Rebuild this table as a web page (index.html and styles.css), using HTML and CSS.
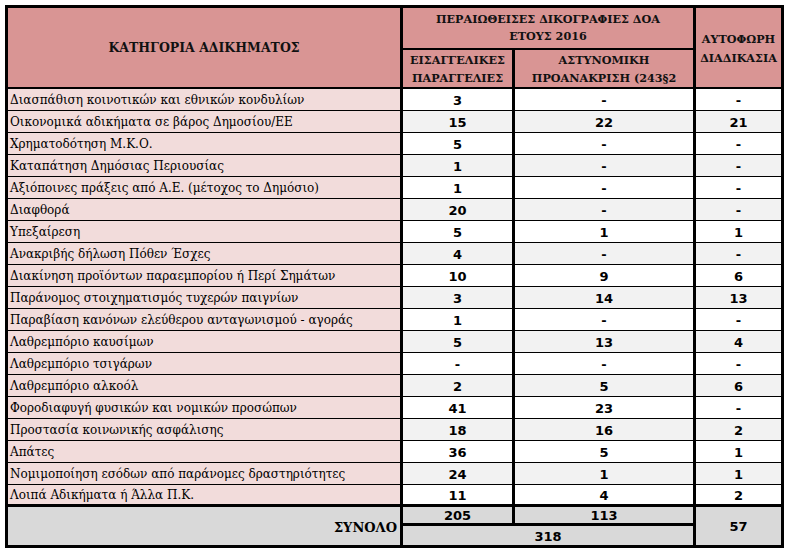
FILE: index.html
```html
<!DOCTYPE html>
<html lang="el">
<head>
<meta charset="utf-8">
<title>Κατηγορία αδικήματος</title>
<link rel="stylesheet" href="styles.css">
</head>
<body>
<div class="tbl">
  <div class="c h h-cat"><span>ΚΑΤΗΓΟΡΙΑ ΑΔΙΚΗΜΑΤΟΣ</span></div>
  <div class="c h h-group"><span>ΠΕΡΑΙΩΘΕΙΣΕΣ ΔΙΚΟΓΡΑΦΙΕΣ ΔΟΑ<br>ΕΤΟΥΣ 2016</span></div>
  <div class="c h h-auto"><span>ΑΥΤΟΦΩΡΗ<br>ΔΙΑΔΙΚΑΣΙΑ</span></div>
  <div class="c h h-sub"><span>ΕΙΣΑΓΓΕΛΙΚΕΣ<br>ΠΑΡΑΓΓΕΛΙΕΣ</span></div>
  <div class="c h h-sub h-subb"><span>ΑΣΤΥΝΟΜΙΚΗ<br>ΠΡΟΑΝΑΚΡΙΣΗ (243§2</span></div>

  <div class="row"><div class="c cat">Διασπάθιση κοινοτικών και εθνικών κονδυλίων</div><div class="c n">3</div><div class="c n">-</div><div class="c n">-</div></div>
  <div class="row alt"><div class="c cat">Οικονομικά αδικήματα σε βάρος Δημοσίου/ΕΕ</div><div class="c n">15</div><div class="c n">22</div><div class="c n">21</div></div>
  <div class="row"><div class="c cat">Χρηματοδότηση Μ.Κ.Ο.</div><div class="c n">5</div><div class="c n">-</div><div class="c n">-</div></div>
  <div class="row alt"><div class="c cat">Καταπάτηση Δημόσιας Περιουσίας</div><div class="c n">1</div><div class="c n">-</div><div class="c n">-</div></div>
  <div class="row"><div class="c cat">Αξιόποινες πράξεις από Α.Ε. (μέτοχος το Δημόσιο)</div><div class="c n">1</div><div class="c n">-</div><div class="c n">-</div></div>
  <div class="row alt"><div class="c cat">Διαφθορά</div><div class="c n">20</div><div class="c n">-</div><div class="c n">-</div></div>
  <div class="row"><div class="c cat">Υπεξαίρεση</div><div class="c n">5</div><div class="c n">1</div><div class="c n">1</div></div>
  <div class="row alt"><div class="c cat">Ανακριβής δήλωση Πόθεν Έσχες</div><div class="c n">4</div><div class="c n">-</div><div class="c n">-</div></div>
  <div class="row"><div class="c cat">Διακίνηση προϊόντων παραεμπορίου ή Περί Σημάτων</div><div class="c n">10</div><div class="c n">9</div><div class="c n">6</div></div>
  <div class="row alt"><div class="c cat">Παράνομος στοιχηματισμός τυχερών παιγνίων</div><div class="c n">3</div><div class="c n">14</div><div class="c n">13</div></div>
  <div class="row"><div class="c cat">Παραβίαση κανόνων ελεύθερου ανταγωνισμού - αγοράς</div><div class="c n">1</div><div class="c n">-</div><div class="c n">-</div></div>
  <div class="row alt"><div class="c cat">Λαθρεμπόριο καυσίμων</div><div class="c n">5</div><div class="c n">13</div><div class="c n">4</div></div>
  <div class="row"><div class="c cat">Λαθρεμπόριο τσιγάρων</div><div class="c n">-</div><div class="c n">-</div><div class="c n">-</div></div>
  <div class="row alt"><div class="c cat">Λαθρεμπόριο αλκοόλ</div><div class="c n">2</div><div class="c n">5</div><div class="c n">6</div></div>
  <div class="row"><div class="c cat">Φοροδιαφυγή φυσικών και νομικών προσώπων</div><div class="c n">41</div><div class="c n">23</div><div class="c n">-</div></div>
  <div class="row alt"><div class="c cat">Προστασία κοινωνικής ασφάλισης</div><div class="c n">18</div><div class="c n">16</div><div class="c n">2</div></div>
  <div class="row"><div class="c cat">Απάτες</div><div class="c n">36</div><div class="c n">5</div><div class="c n">1</div></div>
  <div class="row alt"><div class="c cat">Νομιμοποίηση εσόδων από παράνομες δραστηριότητες</div><div class="c n">24</div><div class="c n">1</div><div class="c n">1</div></div>
  <div class="row end"><div class="c cat">Λοιπά Αδικήματα ή Άλλα Π.Κ.</div><div class="c n">11</div><div class="c n">4</div><div class="c n">2</div></div>

  <div class="c t t-label">ΣΥΝΟΛΟ</div>
  <div class="c t n t-part">205</div>
  <div class="c t n t-part">113</div>
  <div class="c t n t-auto">57</div>
  <div class="c t n t-sum">318</div>
</div>
</body>
</html>
```

FILE: styles.css
```css
html, body {
  margin: 0;
  padding: 0;
  background: #ffffff;
}

.tbl {
  box-sizing: border-box;
  margin: 5px 0 0 5px;
  width: 779px;
  border: 3px solid #000;
  display: grid;
  grid-template-columns: 395px 112px 181px 85px;
  grid-template-rows: 42px 39px repeat(19, 22px) 19px 19px;
  background: #fff;
}

.row {
  display: contents;
}

.c {
  box-sizing: border-box;
  border-right: 3px solid #000;
  border-bottom: 1px solid #000;
  display: flex;
  align-items: center;
  overflow: hidden;
  white-space: nowrap;
  color: #000;
}

.row > .c:last-child {
  border-right: 0;
}

/* Header */
.h {
  background: #d99594;
  justify-content: center;
  text-align: center;
  font-family: "DejaVu Serif", serif;
  font-weight: bold;
  font-size: 11.2px;
  line-height: 17px;
  border-bottom-width: 2px;
  color: #111;
}

.h-cat {
  grid-row: span 2;
  font-size: 12.5px;
}

.h-group {
  grid-column: span 2;
}

.h-auto {
  grid-row: span 2;
  border-right: 0;
  line-height: 19px;
  padding-top: 2px;
}

.h-sub {
  line-height: 18px;
}

/* Body rows */
.cat {
  background: #f2dcdb;
  font-family: "DejaVu Serif", serif;
  font-size: 12px;
  padding-left: 2px;
  padding-top: 1px;
}

.n {
  justify-content: center;
  font-family: "DejaVu Sans", sans-serif;
  font-weight: bold;
  font-size: 13px;
  background: #ffffff;
  padding-top: 1px;
}

.alt .n {
  background: #f2f2f2;
}

.end > .c {
  border-bottom-width: 3px;
}

/* Totals */
.t {
  background: #d9d9d9;
}

.t-label {
  grid-row: span 2;
  border-bottom: 0;
  justify-content: flex-end;
  font-family: "DejaVu Serif", serif;
  font-weight: bold;
  font-size: 13px;
  padding-right: 3px;
  padding-top: 2px;
}

.t-part {
  border-bottom-width: 3px;
  padding-top: 0;
}

.t-auto {
  grid-row: span 2;
  border-right: 0;
  border-bottom: 0;
}

.t-sum {
  grid-column: span 2;
  border-bottom: 0;
}
```
